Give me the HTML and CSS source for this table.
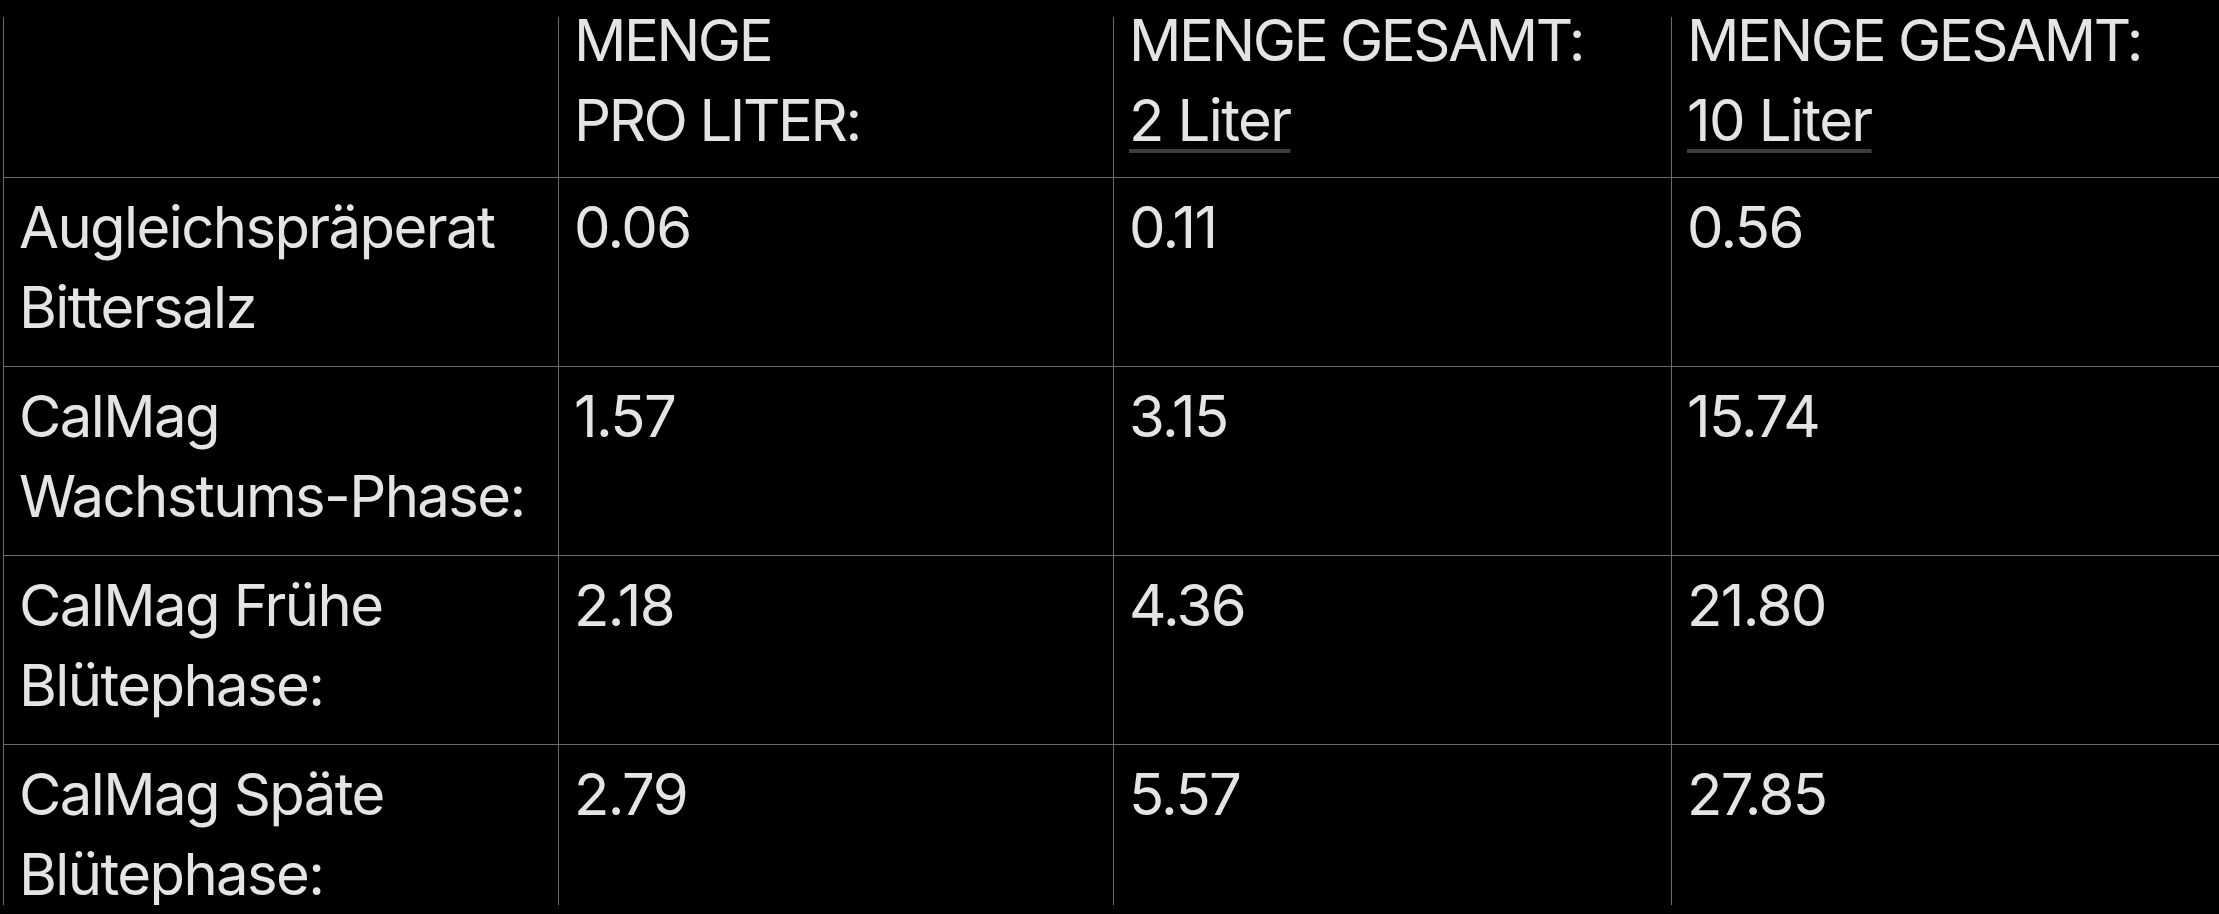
FILE: index.html
```html
<!DOCTYPE html>
<html lang="de">
<head>
<meta charset="utf-8">
<title>Mengen</title>
<link rel="stylesheet" href="styles.css">
</head>
<body>
<div class="viewport">
  <div class="table">
    <div class="cell head"></div>
    <div class="cell head">MENGE<br>PRO LITER:</div>
    <div class="cell head">MENGE GESAMT:<br><span class="link">2 Liter</span></div>
    <div class="cell head">MENGE GESAMT:<br><span class="link">10 Liter</span></div>

    <div class="cell">Augleichspräperat Bittersalz</div>
    <div class="cell">0.06</div>
    <div class="cell">0.11</div>
    <div class="cell">0.56</div>

    <div class="cell">CalMag Wachstums-Phase:</div>
    <div class="cell">1.57</div>
    <div class="cell">3.15</div>
    <div class="cell">15.74</div>

    <div class="cell">CalMag Frühe Blütephase:</div>
    <div class="cell">2.18</div>
    <div class="cell">4.36</div>
    <div class="cell">21.80</div>

    <div class="cell">CalMag Späte Blütephase:</div>
    <div class="cell">2.79</div>
    <div class="cell">5.57</div>
    <div class="cell">27.85</div>
  </div>
</div>
</body>
</html>
```
FILE: styles.css
```css
html, body {
  margin: 0;
  padding: 0;
  background: #000;
  overflow: hidden;
}

body {
  color: #e4e4e4;
  font-family: Inter, "Noto Sans", "Liberation Sans", sans-serif;
  font-size: 58px;
  line-height: 80px;
  letter-spacing: -1.6px;
}

.viewport {
  margin-left: 3px;
  height: 905px;
  overflow: hidden;
}

.table {
  display: grid;
  grid-template-columns: 555px 555px 558px 558px;
  grid-template-rows: 178px repeat(4, 189px);
  width: 2226px;
}

.cell {
  border-left: 1px solid #6b6b6b;
  border-bottom: 1px solid #6b6b6b;
  padding: 9px 8px 0 15px;
  white-space: normal;
}

.cell.head {
  padding-top: 0;
  border-left: none;
  padding-left: 16px;
  letter-spacing: -2.4px;
  background: linear-gradient(#6b6b6b, #6b6b6b) no-repeat left 17px / 1px calc(100% - 17px);
}

.link {
  letter-spacing: -1.6px;
  text-decoration: underline;
  text-decoration-color: #3d3d3d;
  text-decoration-thickness: 4px;
  text-underline-offset: 8px;
  text-decoration-skip-ink: none;
}
```
